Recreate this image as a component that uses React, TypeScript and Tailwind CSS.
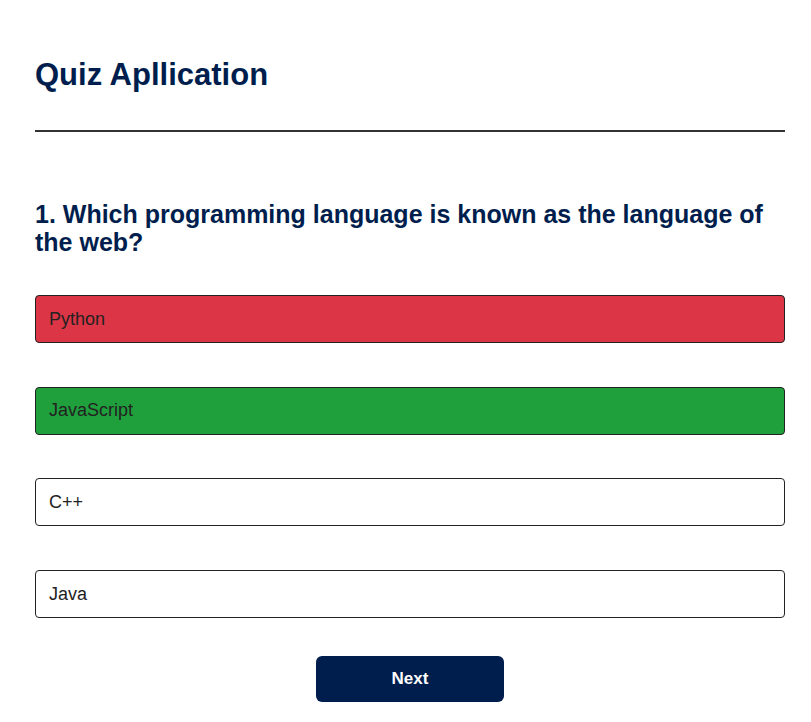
const options = [
  { text: "Python", state: "wrong" },
  { text: "JavaScript", state: "right" },
  { text: "C++", state: "none" },
  { text: "Java", state: "none" },
];

const App = () => {
  return (
    <div className="min-h-screen bg-white" style={{ fontFamily: '"Liberation Sans", Arial, sans-serif' }}>
      <div className="w-[750px] ml-[35px] pt-[57px]">
        <h1 className="text-[31px] leading-[36px] font-bold text-[#001e4d] pb-[37px] border-b-2 border-[#333]">
          Quiz Apllication
        </h1>

        <h2 className="mt-[68px] text-[25px] leading-[28px] font-bold text-[#001e4d]">
          1. Which programming language is known as the language of the web?
        </h2>

        <div className="mt-[39px] flex flex-col gap-[43.7px]">
          {options.map((o) => (
            <button
              key={o.text}
              className={`w-full h-[48px] text-left px-[13px] text-[18px] text-[#222] border border-[#222] rounded-[4px] ${
                o.state === "wrong" ? "bg-[#dc3545]" : o.state === "right" ? "bg-[#1fa03c]" : "bg-white"
              }`}
            >
              {o.text}
            </button>
          ))}
        </div>

        <button className="block mx-auto mt-[38px] w-[188px] h-[46px] bg-[#001e4d] text-white text-[17px] font-bold rounded-[6px]">
          Next
        </button>
      </div>
    </div>
  );
};

export default App;
